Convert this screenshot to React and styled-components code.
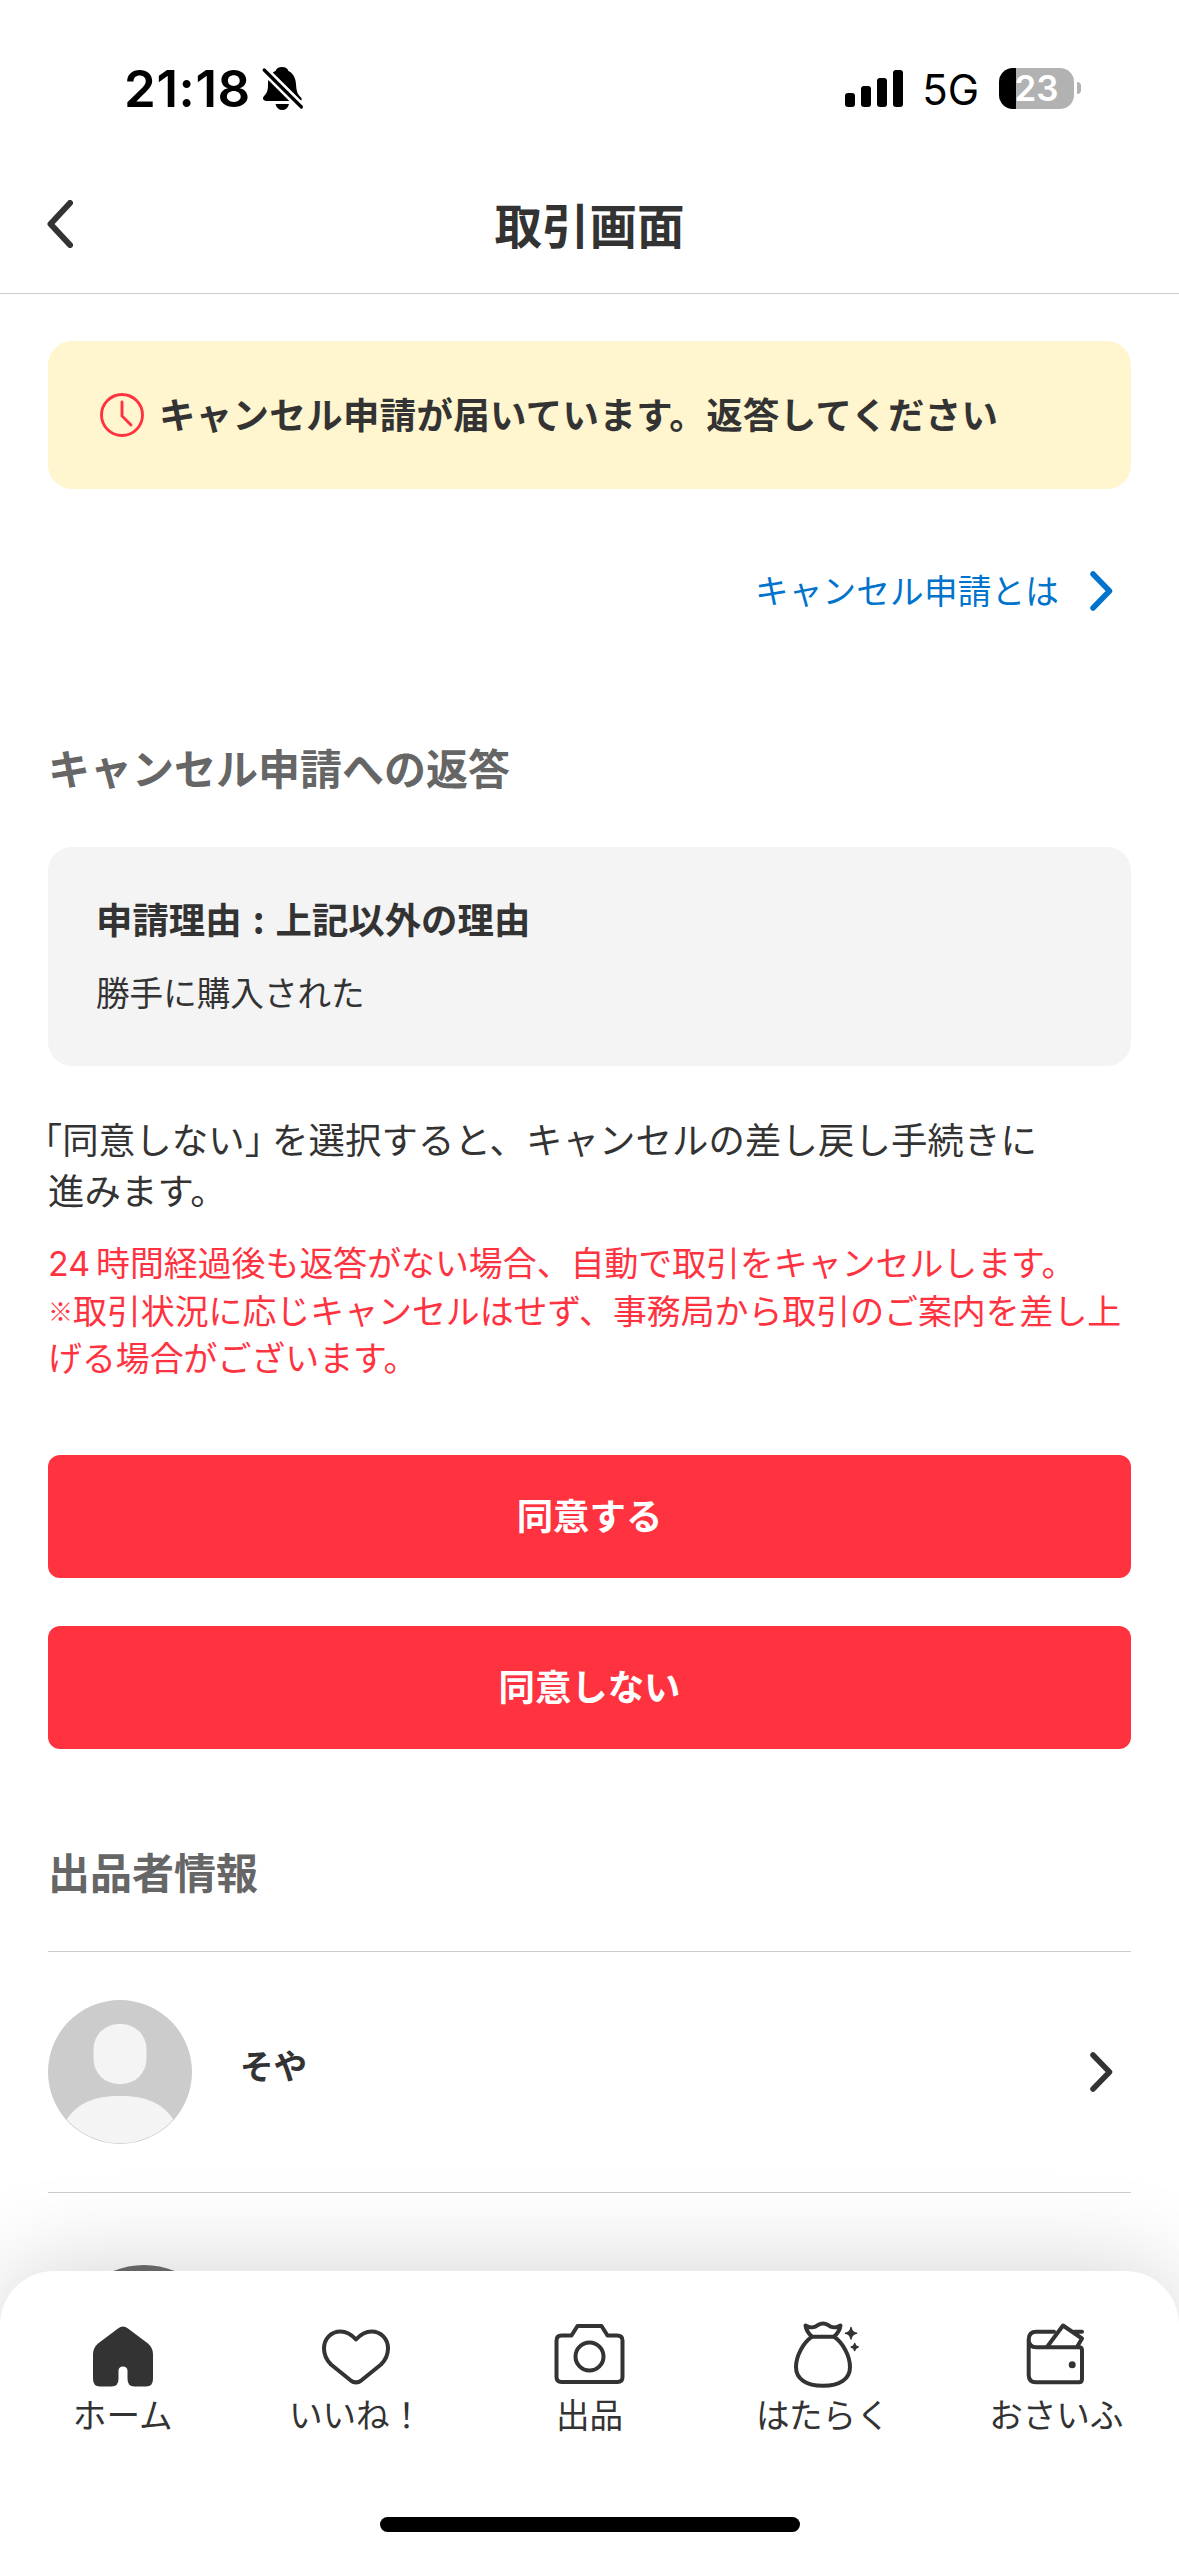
import styled, { createGlobalStyle } from "styled-components";

const navItems = [
  { label: "ホーム", Icon: HomeIcon },
  { label: "いいね！", Icon: HeartIcon },
  { label: "出品", Icon: CameraIcon },
  { label: "はたらく", Icon: BagIcon },
  { label: "おさいふ", Icon: WalletIcon },
];

function App() {
  return (
    <Screen>
      <GlobalStyle />
      <StatusBar>
        <StatusLeft>
          <Time>21:18</Time>
          <BellOffIcon />
        </StatusLeft>
        <StatusRight>
          <Signal>
            <Bar $h={14} />
            <Bar $h={21} />
            <Bar $h={29} />
            <Bar $h={37} />
          </Signal>
          <Network>5G</Network>
          <Battery>
            <BatteryBody>23</BatteryBody>
            <BatteryTip />
          </Battery>
        </StatusRight>
      </StatusBar>

      <Header>
        <BackButton aria-label="戻る">
          <svg width="26" height="48" viewBox="0 0 26 48">
            <path d="M23 3 L3.5 24 L23 45" />
          </svg>
        </BackButton>
        <Title>取引画面</Title>
      </Header>

      <Main>
        <Notice>
          <ClockIcon />
          <NoticeText>キャンセル申請が届いています。返答してください</NoticeText>
        </Notice>

        <HelpLink>
          <HelpText>キャンセル申請とは</HelpText>
          <Chevron />
        </HelpLink>

        <SectionTitle $top={106}>キャンセル申請への返答</SectionTitle>
        <ReasonCard>
          <ReasonTitle>
            申請理由<Colon>:</Colon>上記以外の理由
          </ReasonTitle>
          <ReasonText>勝手に購入された</ReasonText>
        </ReasonCard>

        <Description>
          <OpenBracket>「</OpenBracket>同意しない<CloseBracket>」</CloseBracket>
          を選択すると、キャンセルの差し戻し手続きに
          <br />
          進みます。
        </Description>
        <Warning>
          <Digits>24</Digits>時間経過後も返答がない場合、自動で取引をキャンセルします。
          <br />
          <Mark>※</Mark>取引状況に応じキャンセルはせず、事務局から取引のご案内を差し上
          <br />
          げる場合がございます。
        </Warning>

        <Actions>
          <Button>同意する</Button>
          <Button>同意しない</Button>
        </Actions>

        <SectionTitle $top={92}>出品者情報</SectionTitle>
        <SellerRow>
          <AvatarIcon />
          <SellerName>そや</SellerName>
          <Chevron />
        </SellerRow>
        <ItemRow>
          <ItemThumb />
        </ItemRow>
      </Main>

      <BottomNav>
        <NavList>
          {navItems.map(({ label, Icon }) => {
            return (
              <NavItem key={label}>
                <Icon />
                <NavLabel>{label}</NavLabel>
              </NavItem>
            );
          })}
        </NavList>
        <HomeIndicator />
      </BottomNav>
    </Screen>
  );
}

function BellOffIcon() {
  return (
    <svg width="44" height="48" viewBox="0 0 44 48">
      <path d="M22 3C25.500 3 27.500 4.500 28.500 7C33.500 9.500 35.500 14 36 20C36.500 28 37.500 30 41 33.500C42.500 35.500 41.500 37 39 37H7C3 37 2 34.500 4 32C7 29 8 27 8 20C8 13 11 9 15.500 7C16.500 4.500 18.500 3 22 3Z" />
      <path d="M15.500 40H29C28 44 25.500 46 22.300 46C19 46 16.500 44 15.500 40Z" />
      <path d="M0 1.800L46 47.600" stroke="#fff" strokeWidth="8.500" />
      <path d="M4.200 6L41.400 43" stroke="#000" strokeWidth="3.200" strokeLinecap="round" />
    </svg>
  );
}

function ClockIcon() {
  return (
    <svg width="44" height="44" viewBox="0 0 44 44" fill="none" stroke="#ff333f" strokeWidth="2.900" strokeLinecap="round">
      <circle cx="22" cy="22" r="20.500" />
      <path d="M22 9V23L31 32" />
    </svg>
  );
}

function Chevron() {
  return (
    <ChevronSvg viewBox="0 0 23 40">
      <path d="M3 3L19.500 20L3 37" />
    </ChevronSvg>
  );
}

function AvatarIcon() {
  return (
    <svg width="144" height="144" viewBox="0 0 144 144">
      <defs>
        <clipPath id="face">
          <circle cx="72" cy="72" r="71.300" />
        </clipPath>
      </defs>
      <circle cx="72" cy="72" r="72" fill="#ccc" />
      <g clipPath="url(#face)" fill="#f4f4f4">
        <rect x="45.500" y="24" width="53" height="60" rx="25" />
        <path d="M19 119C30 103 46 96 72 96C98 96 114 103 125 119V144H19Z" />
      </g>
    </svg>
  );
}

function HomeIcon() {
  return (
    <svg width="84" height="78" viewBox="0 0 84 78">
      <path
        fill="#333"
        d="M37 11.500Q42 7.500 47 11.500L67 26.500Q72 31 72 37V62Q72 69.500 65 69.500H53.500Q46.500 69.500 46.500 62V54Q46.500 49.500 42 49.500Q37.500 49.500 37.500 54V62Q37.500 69.500 30.500 69.500H19Q12 69.500 12 62V37Q12 31 17 26.500Z"
      />
    </svg>
  );
}

function HeartIcon() {
  return (
    <LineIcon viewBox="0 0 84 78">
      <path d="M42 22.500C37 17 32 14.500 26.500 14.500C17 14.500 10 22 10 31.500C10 38 12.500 43 17 47.500L36.500 63.300Q42 67.500 47.500 63.300L67 47.500C71.500 43 74 38 74 31.500C74 22 67 14.500 57.500 14.500C52 14.500 47 17 42 22.500Z" />
    </LineIcon>
  );
}

function CameraIcon() {
  return (
    <LineIcon viewBox="0 0 84 78">
      <path d="M9.500 23.500Q9.500 18.500 14.500 18.500H24.500L30.500 9H54.500L60.500 18.500H70Q75.500 18.500 75.500 23.500V60Q75.500 65 70.500 65H14.500Q9.500 65 9.500 60Z" />
      <circle cx="42.500" cy="39.500" r="14" />
    </LineIcon>
  );
}

function BagIcon() {
  return (
    <LineIcon viewBox="0 0 84 78">
      <path d="M31 19.700C28 17 25 13 24.500 8.500C29 11.500 34 10.500 37 8Q42 5 47 8C50 10.500 55 11.500 59.500 8.500C59 13 56 17 53 19.700Z" />
      <path d="M31 19.700C22 26 15 39 15 50C15 62 25 68.700 42 68.700C59 68.700 69 62 69 50C69 39 62 26 53 19.700" />
      <path
        fill="#333"
        strokeWidth="1.500"
        d="M70 10.500Q70.800 15.500 75.500 16.300Q70.800 17.100 70 22Q69.200 17.100 64.500 16.300Q69.200 15.500 70 10.500ZM73.700 26.500Q74.200 29.500 77.200 30Q74.200 30.500 73.700 33.500Q73.200 30.500 70.200 30Q73.200 29.500 73.700 26.500Z"
      />
    </LineIcon>
  );
}

function WalletIcon() {
  return (
    <LineIcon viewBox="0 0 84 78">
      <path d="M40 14.700H22.500Q14.700 14.700 14.700 22.500V58Q14.700 65.300 22 65.300H65Q68 65.300 68 62.300V33.300Q68 30.300 65 30.300H22.500Q14.700 30.300 14.700 22.500" />
      <path d="M33 30L49 8.500L68 21.500L63 30M60 14.700H68" />
      <circle cx="58.200" cy="47.700" r="3.500" fill="#333" stroke="none" />
    </LineIcon>
  );
}

const GlobalStyle = createGlobalStyle`
  * {
    box-sizing: border-box;
  }
  body {
    margin: 0;
    background: #fff;
    color: #333;
    font-family: "Noto Sans CJK JP", sans-serif;
  }
  svg {
    display: block;
    flex-shrink: 0;
  }
`;

const Screen = styled.div`
  position: relative;
  width: 1179px;
  height: 2556px;
  overflow: hidden;
  background: #fff;
`;

const StatusBar = styled.div`
  display: flex;
  align-items: center;
  justify-content: space-between;
  height: 176px;
  padding: 0 98px 0 124px;
  color: #000;
  font-family: Inter, sans-serif;
`;

const StatusLeft = styled.div`
  display: flex;
  align-items: center;
  gap: 9px;
`;

const Time = styled.span`
  font-size: 51px;
  font-weight: 600;
  letter-spacing: 0.6px;
`;

const StatusRight = styled.div`
  display: flex;
  align-items: center;
`;

const Signal = styled.div`
  display: flex;
  align-items: flex-end;
  gap: 6px;
`;

const Bar = styled.span`
  width: 10px;
  height: ${(props) => props.$h}px;
  border-radius: 3px;
  background: #000;
`;

const Network = styled.span`
  margin: 2px 20px 0 19px;
  font-size: 42px;
`;

const Battery = styled.div`
  display: flex;
  align-items: center;
  gap: 3px;
`;

const BatteryBody = styled.div`
  width: 75px;
  height: 41px;
  border-radius: 14px;
  background: linear-gradient(to right, #000 17px, #b2b2b2 17px);
  color: #fff;
  font-size: 35px;
  font-weight: 600;
  line-height: 41px;
  text-align: center;
`;

const BatteryTip = styled.div`
  width: 4px;
  height: 12px;
  border-radius: 0 4px 4px 0;
  background: #b2b2b2;
`;

const Header = styled.header`
  display: grid;
  grid-template-columns: 1fr auto 1fr;
  align-items: center;
  height: 118px;
  padding: 0 47px 22px;
  border-bottom: 1px solid #ccc;
`;

const BackButton = styled.button`
  justify-self: start;
  padding: 0;
  border: none;
  background: none;
  path {
    fill: none;
    stroke: #333;
    stroke-width: 6;
    stroke-linecap: round;
    stroke-linejoin: round;
  }
`;

const Title = styled.h1`
  margin: 0;
  font-size: 47.5px;
  font-weight: 700;
`;

const Main = styled.main`
  padding: 47px 48px 0;
`;

const Notice = styled.div`
  display: flex;
  align-items: center;
  gap: 15px;
  height: 148px;
  padding-left: 52px;
  border-radius: 24px;
  background: #fff5cf;
  font-size: 36.4px;
  font-weight: 700;
`;

const NoticeText = styled.span`
  padding-bottom: 5px;
  letter-spacing: 0.4px;
`;

const HelpLink = styled.a`
  display: flex;
  align-items: center;
  justify-content: flex-end;
  gap: 31px;
  height: 80px;
  margin-top: 62px;
  padding-right: 18px;
  color: #0073cc;
  font-size: 33.6px;
`;

const HelpText = styled.span`
  padding-bottom: 4px;
  letter-spacing: 0.2px;
`;

const ChevronSvg = styled.svg`
  width: 23px;
  height: 40px;
  fill: none;
  stroke: currentColor;
  stroke-width: 5.5;
  stroke-linecap: round;
  stroke-linejoin: round;
`;

const SectionTitle = styled.h2`
  margin: ${(props) => props.$top}px 0 50px;
  color: #666;
  font-size: 42px;
  font-weight: 700;
  line-height: 60px;
`;

const ReasonCard = styled.div`
  height: 219px;
  padding: 46px 48px;
  border-radius: 24px;
  background: #f4f4f4;
`;

const ReasonTitle = styled.div`
  font-size: 36.4px;
  font-weight: 700;
  line-height: 51px;
`;

const Colon = styled.span`
  display: inline-block;
  width: 34px;
  text-align: center;
`;

const ReasonText = styled.div`
  margin-top: 24px;
  font-size: 33.6px;
  line-height: 47px;
`;

const Description = styled.p`
  margin: 47px 0 0;
  font-size: 36.4px;
  letter-spacing: 0.1px;
  line-height: 51px;
  white-space: nowrap;
`;

const OpenBracket = styled.span`
  margin-left: -4px;
  font-feature-settings: "halt";
`;

const CloseBracket = styled.span`
  margin-right: 9px;
  font-feature-settings: "halt";
`;

const Warning = styled.p`
  margin: 23px 0 0;
  color: #ff333f;
  font-size: 33.9px;
  line-height: 47.6px;
  white-space: nowrap;
`;

const Digits = styled.span`
  margin-right: 6px;
  font-family: Inter, sans-serif;
  line-height: 1;
`;

const Mark = styled.span`
  font-size: 25px;
  font-weight: 500;
  line-height: 1;
  vertical-align: 3px;
`;

const Actions = styled.div`
  display: grid;
  gap: 48px;
  margin-top: 74px;
`;

const Button = styled.button`
  height: 123px;
  padding: 0 0 4px;
  border: none;
  border-radius: 12px;
  background: #ff333f;
  color: #fff;
  font-family: inherit;
  font-size: 36.4px;
  font-weight: 700;
`;

const SellerRow = styled.div`
  display: flex;
  align-items: center;
  gap: 48px;
  height: 241px;
  padding-right: 18px;
  border-top: 1px solid #ccc;
`;

const SellerName = styled.span`
  flex: 1;
  padding-bottom: 14px;
  font-size: 33.6px;
  font-weight: 700;
`;

const ItemRow = styled.div`
  padding: 72px 16px 0;
  border-top: 1px solid #ccc;
`;

const ItemThumb = styled.div`
  width: 160px;
  height: 160px;
  border-radius: 50%;
  background: #6e6e6e;
`;

const BottomNav = styled.nav`
  position: absolute;
  left: 0;
  right: 0;
  bottom: 0;
  height: 285px;
  padding: 46px 6px 0;
  border-radius: 54px 54px 0 0;
  background: #fff;
  box-shadow: 0 0 100px rgba(0, 0, 0, 0.18);
`;

const NavList = styled.div`
  display: grid;
  grid-template-columns: repeat(5, 1fr);
`;

const NavItem = styled.a`
  display: flex;
  flex-direction: column;
  align-items: center;
`;

const NavLabel = styled.span`
  margin-top: -3px;
  font-size: 33.6px;
  line-height: 44px;
`;

const LineIcon = styled.svg`
  width: 84px;
  height: 78px;
  fill: none;
  stroke: #333;
  stroke-width: 4;
  stroke-linecap: round;
  stroke-linejoin: round;
`;

const HomeIndicator = styled.div`
  width: 420px;
  height: 15px;
  margin: 81px auto 0;
  border-radius: 8px;
  background: #000;
`;

export default App;
